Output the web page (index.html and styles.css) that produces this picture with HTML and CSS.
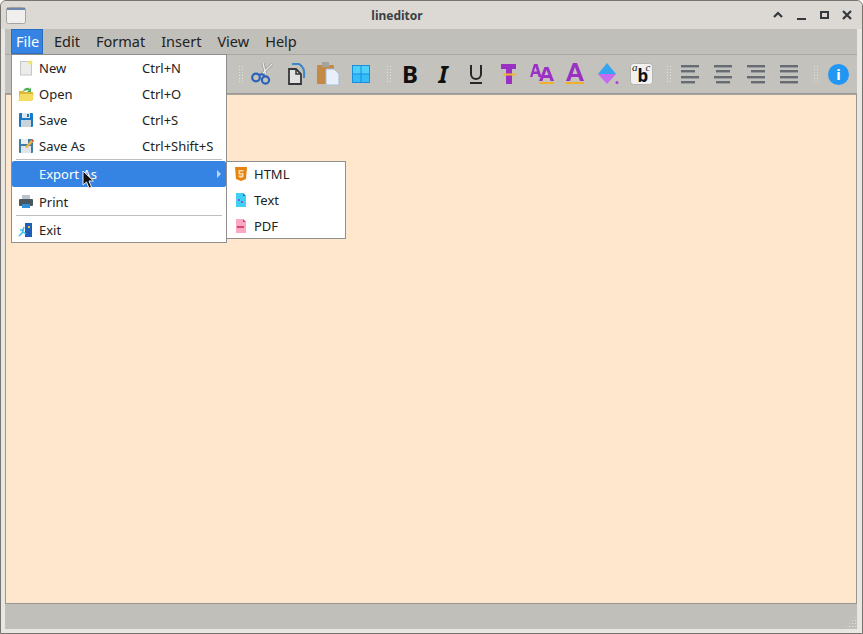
FILE: index.html
```html
<!DOCTYPE html>
<html lang="en">
<head>
    <meta charset="UTF-8">
    <meta name="viewport" content="width=device-width, initial-scale=1.0">
    <title>lineditor</title>
    <link rel="stylesheet" href="styles.css">
</head>
<body>
    <div class="window">
        <div class="titlebar">
            <svg class="app-icon" width="20" height="17" viewBox="0 0 20 17">
                <rect x="0.5" y="0.5" width="19" height="16" rx="2" fill="#f0efed" stroke="#a5a3a0"/>
                <rect x="1" y="1" width="18" height="2" fill="#6f86ad"/>
            </svg>
            <span class="title">lineditor</span>
            <div class="win-buttons">
                <svg width="12" height="12" viewBox="0 0 12 12"><path d="M2 8 L6 4 L10 8" fill="none" stroke="#33393d" stroke-width="2.2"/></svg>
                <svg width="12" height="12" viewBox="0 0 12 12"><rect x="2" y="9" width="9" height="2" fill="#33393d"/></svg>
                <svg width="12" height="12" viewBox="0 0 12 12"><rect x="3" y="3" width="7" height="6" fill="none" stroke="#33393d" stroke-width="2"/></svg>
                <svg width="12" height="12" viewBox="0 0 12 12"><path d="M2 2 L10 10 M10 2 L2 10" fill="none" stroke="#33393d" stroke-width="2.2"/></svg>
            </div>
        </div>
        <div class="content">
            <div class="menubar">
                <span class="menu-title active">File</span>
                <span class="menu-title">Edit</span>
                <span class="menu-title">Format</span>
                <span class="menu-title">Insert</span>
                <span class="menu-title">View</span>
                <span class="menu-title">Help</span>
            </div>
            <div class="toolbar">
                <span class="grip first-grip"></span>
                <svg class="tool" width="24" height="24" viewBox="0 0 24 24">
                    <path d="M13 1 L15.5 12 M22 2 L11 13" stroke="#8f8f8d" stroke-width="2.6" fill="none"/>
                    <path d="M13 1 L15.5 12 M22 2 L11 13" stroke="#ececea" stroke-width="1.4" fill="none"/>
                    <circle cx="6" cy="15.5" r="3.8" fill="none" stroke="#2a62b8" stroke-width="2.2"/>
                    <circle cx="15.5" cy="18" r="3.6" fill="none" stroke="#2a62b8" stroke-width="2.2"/>
                    <path d="M9 13 L12 12 L15 14" fill="none" stroke="#2a62b8" stroke-width="2"/>
                </svg>
                <svg class="tool" width="24" height="24" viewBox="0 0 24 24">
                    <path d="M9 2 H16 C20 4 22 8 21 16" fill="none" stroke="#3d87c4" stroke-width="2"/>
                    <path d="M6 7 H13 L18 12 V22 H6 Z" fill="#e2e2e0" stroke="#33363a" stroke-width="1.8"/>
                    <path d="M13 7 V12 H18" fill="none" stroke="#33363a" stroke-width="1.5"/>
                </svg>
                <svg class="tool" width="24" height="24" viewBox="0 0 24 24">
                    <rect x="1" y="3" width="17" height="19" rx="1" fill="#c48a45"/>
                    <rect x="6" y="0" width="7" height="5" fill="#a3a3a0"/>
                    <path d="M10 7 H18 L23 12 V23 H10 Z" fill="#e8eefa" stroke="#a9bcd4"/>
                </svg>
                <svg class="tool" width="24" height="24" viewBox="0 0 24 24">
                    <rect x="3" y="3" width="18" height="18" fill="#1a8fe0"/>
                    <rect x="4" y="4" width="7.5" height="7.5" fill="#4fd0fb"/>
                    <rect x="12.5" y="4" width="7.5" height="7.5" fill="#4fd0fb"/>
                    <rect x="4" y="12.5" width="7.5" height="7.5" fill="#35bdf5"/>
                    <rect x="12.5" y="12.5" width="7.5" height="7.5" fill="#35bdf5"/>
                </svg>
                <span class="grip second-grip"></span>
                <span class="tool-letter bold">B</span>
                <span class="tool-letter italic">I</span>
                <svg class="tool" width="24" height="24" viewBox="0 0 24 24">
                    <path d="M7 3 V12 C7 18.5 17 18.5 17 12 V3" fill="none" stroke="#26282a" stroke-width="2"/>
                    <rect x="6" y="20" width="12" height="2" fill="#26282a"/>
                </svg>
                <svg class="tool" width="24" height="24" viewBox="0 0 24 24">
                    <path d="M4 2 H19 V7 H15 V22 H9 V7 H4 Z" fill="#9b30c4"/>
                    <rect x="6" y="11.5" width="13" height="2" fill="#f4b52a"/>
                </svg>
                <svg class="tool" width="24" height="24" viewBox="0 0 24 24">
                    <path d="M0 15 L4 2 H7.5 L11.5 15 H8.5 L7.7 12 H3.3 L2.5 15 Z M4 9.5 H7 L5.5 5 Z" fill="#9b30c4" fill-rule="evenodd"/>
                    <path d="M9 19 L14.5 5 H18.5 L24 19 H20.5 L19.5 16 H13.5 L12.5 19 Z M14.5 13 H18.5 L16.5 8 Z" fill="#9b30c4" fill-rule="evenodd"/>
                    <rect x="9" y="20" width="15" height="2" fill="#f0b02a"/>
                </svg>
                <svg class="tool" width="24" height="24" viewBox="0 0 24 24">
                    <path d="M3 19 L10 1 H14 L21 19 H17 L15.5 15 H8.5 L7 19 Z M9.5 12 H14.5 L12 5 Z" fill="#9b30c4" fill-rule="evenodd"/>
                    <rect x="3" y="20" width="18" height="2" fill="#f0b02a"/>
                </svg>
                <svg class="tool" width="24" height="24" viewBox="0 0 24 24">
                    <path d="M11 1 L20 12 H2 Z" fill="#36a5f0"/>
                    <path d="M2 12 H20 L11 22 Z" fill="#c66bf0"/>
                    <circle cx="21" cy="20.5" r="1.5" fill="#b13fd8"/>
                </svg>
                <svg class="tool abc" width="24" height="24" viewBox="0 0 24 24">
                    <rect x="1.5" y="1.5" width="22" height="21" rx="3" fill="#f2f1ef" stroke="#b5b4b0"/>
                    <text x="3" y="9" class="abc-small">a</text>
                    <text x="8.5" y="20" class="abc-big">b</text>
                    <text x="16.5" y="9" class="abc-small">c</text>
                </svg>
                <span class="grip fourth-grip"></span>
                <span class="lines left"><i></i><i></i><i></i><i></i></span>
                <span class="lines center"><i></i><i></i><i></i><i></i></span>
                <span class="lines right"><i></i><i></i><i></i><i></i></span>
                <span class="lines fill"><i></i><i></i><i></i><i></i></span>
                <span class="grip third-grip"></span>
                <span class="info">i</span>
            </div>
            <div class="editor"></div>
            <div class="statusbar"><span class="size-grip"></span></div>
        </div>

        <div class="menu file-menu">
            <div class="item">
                <svg class="item-icon" width="16" height="16" viewBox="0 0 16 16">
                    <rect x="2.5" y="1.5" width="11" height="13.5" fill="#ececea" stroke="#c6c6c4"/>
                    <circle cx="12.5" cy="2.5" r="2" fill="#f4e45a"/>
                </svg>
                <span class="label">New</span><span class="shortcut">Ctrl+N</span>
            </div>
            <div class="item">
                <svg class="item-icon" width="16" height="16" viewBox="0 0 16 16">
                    <path d="M5 5 C7 1 10 1 12 3 L13 1 V6 H9 L11 4" fill="#4fae5a"/>
                    <path d="M1 5 H6 L7 6 H15 V14 H1 Z" fill="#d9b93a"/>
                    <path d="M2 8 H16 L14 15 H0.5 Z" fill="#f5dc60"/>
                </svg>
                <span class="label">Open</span><span class="shortcut">Ctrl+O</span>
            </div>
            <div class="item">
                <svg class="item-icon" width="16" height="16" viewBox="0 0 16 16">
                    <rect x="1" y="1" width="14" height="14" rx="1" fill="#1c78c4"/>
                    <rect x="4" y="1" width="8" height="5" fill="#dfe8ee"/>
                    <rect x="9" y="2" width="2" height="3" fill="#1c78c4"/>
                    <rect x="3" y="8" width="10" height="7" fill="#c9d3da"/>
                </svg>
                <span class="label">Save</span><span class="shortcut">Ctrl+S</span>
            </div>
            <div class="item">
                <svg class="item-icon" width="16" height="16" viewBox="0 0 16 16">
                    <rect x="1" y="1" width="14" height="14" rx="1" fill="#3f7fa6"/>
                    <rect x="3" y="1" width="7" height="5" fill="#e9eef2"/>
                    <rect x="3" y="8" width="10" height="7" fill="#dfe5e8"/>
                    <path d="M7 9 L14 1 L16 3 L9 10 Z" fill="#f0b040"/>
                    <path d="M14 1 L16 3 L15 4 L13 2 Z" fill="#d84f3f"/>
                </svg>
                <span class="label">Save As</span><span class="shortcut">Ctrl+Shift+S</span>
            </div>
            <div class="separator"></div>
            <div class="item selected">
                <span class="item-icon"></span>
                <span class="label">Export As</span>
                <span class="arrow"></span>
            </div>
            <div class="item print-item">
                <svg class="item-icon" width="16" height="16" viewBox="0 0 16 16">
                    <rect x="4" y="1" width="8" height="5" fill="#b9c4cc"/>
                    <rect x="1" y="5" width="14" height="7" rx="1" fill="#4a5660"/>
                    <rect x="4" y="10" width="8" height="4" fill="#2f8fd8"/>
                </svg>
                <span class="label">Print</span>
            </div>
            <div class="separator"></div>
            <div class="item exit-item">
                <svg class="item-icon" width="16" height="16" viewBox="0 0 16 16">
                    <rect x="7" y="1" width="7" height="14" fill="#1d5fb8"/>
                    <rect x="10" y="4" width="2" height="2" fill="#f2c230"/>
                    <path d="M2 8 H6 M6 5 L4 11 L1 14 M5 10 L8 12" fill="none" stroke="#35c2ee" stroke-width="1.5"/>
                </svg>
                <span class="label">Exit</span>
            </div>
        </div>

        <div class="menu export-menu">
            <div class="item">
                <svg class="item-icon" width="16" height="16" viewBox="0 0 16 16">
                    <path d="M2 1 H14 L13 13 L8 15 L3 13 Z" fill="#e8820c"/>
                    <path d="M5.5 4 H10.5 V5.5 H7 V7 H10.5 V11 L8 12 L5.5 11 V9.5 H9 V8.5 H5.5 Z" fill="#f6dcae"/>
                </svg>
                <span class="label">HTML</span>
            </div>
            <div class="item">
                <svg class="item-icon" width="16" height="16" viewBox="0 0 16 16">
                    <path d="M3 1 H10 L13 4 V15 H3 Z" fill="#3fd0f4"/>
                    <path d="M10 1 L13 4 H10 Z" fill="#1d7fc0"/>
                    <rect x="5" y="7" width="2" height="2" fill="#7a60d0"/>
                    <rect x="8" y="9" width="2" height="2" fill="#8a50d8"/>
                </svg>
                <span class="label">Text</span>
            </div>
            <div class="item">
                <svg class="item-icon" width="16" height="16" viewBox="0 0 16 16">
                    <path d="M3 1 H10 L13 4 V15 H3 Z" fill="#fba8c4"/>
                    <path d="M10 1 L13 4 H10 Z" fill="#e0406f"/>
                    <rect x="4" y="8" width="7" height="2" fill="#d8486f"/>
                </svg>
                <span class="label">PDF</span>
            </div>
        </div>

        <svg class="cursor" width="14" height="20" viewBox="0 0 14 20">
            <path d="M1 1 V15 L4.5 12 L7 18 L9.5 17 L7 11 H11.5 Z" fill="#111" stroke="#eee" stroke-width="1"/>
        </svg>
    </div>
</body>
</html>
```

FILE: styles.css
```css
* {
    box-sizing: border-box;
    margin: 0;
    padding: 0;
}

html, body {
    width: 863px;
    height: 634px;
    overflow: hidden;
}

body {
    font-family: "Noto Sans", sans-serif;
    background: #fff;
}

.window {
    position: relative;
    width: 863px;
    height: 634px;
    background: #e9e7e4;
    border: 1px solid #77746f;
    border-radius: 6px 6px 0 0;
    display: flex;
    flex-direction: column;
}

.titlebar {
    height: 28px;
    flex-shrink: 0;
    background: #dcd8d4;
    border-radius: 6px 6px 0 0;
    display: flex;
    align-items: center;
    padding: 0 9px 0 5px;
}

.title {
    flex: 1;
    text-align: center;
    font-size: 12px;
    font-weight: 700;
    color: #3a3f42;
    padding-right: 4px;
}

.win-buttons {
    display: flex;
    gap: 11px;
}

.content {
    flex: 1;
    display: flex;
    flex-direction: column;
    margin: 0 5px 4px 4px;
}

.menubar {
    height: 25px;
    background: #c0bfba;
    display: flex;
    padding-left: 6px;
    font-size: 14.5px;
    color: #222;
}

.menu-title {
    padding: 0 8px;
    line-height: 25px;
}

.menu-title.active {
    background: #3584e4;
    border: 1px solid #2a6cbd;
    color: #fff;
    padding: 0 4px;
    width: 32px;
    line-height: 23px;
    margin-right: 3px;
}

.toolbar {
    height: 40px;
    background: #c3c2bd;
    border-top: 1px solid #a9a8a3;
    border-bottom: 1px solid #9a9994;
    display: flex;
    align-items: center;
    padding-left: 233px;
}

.grip {
    width: 6px;
    height: 18px;
    flex-shrink: 0;
    background-image: radial-gradient(#e4e3e0 1px, transparent 1px);
    background-size: 3px 3px;
}

.tool {
    flex-shrink: 0;
    margin-right: 9px;
}

.tool.abc {
    margin-right: 0;
}

.abc-small {
    font-family: "Liberation Serif", serif;
    font-size: 11px;
    font-style: italic;
    fill: #222;
}

.abc-big {
    font-family: "Noto Sans", sans-serif;
    font-size: 17px;
    font-weight: 700;
    fill: #111;
}

.first-grip {
    margin-right: 6px;
}

.second-grip {
    margin: 0 6px 0 4px;
}

.fourth-grip {
    margin: 0 9px 0 13px;
}

.third-grip {
    margin: 0 9px 0 0;
}

.tool-letter {
    width: 24px;
    margin-right: 9px;
    text-align: center;
    line-height: 24px;
    color: #111;
    font-size: 24px;
    font-weight: 700;
}

.tool-letter.italic {
    font-style: italic;
}

.lines {
    width: 18px;
    height: 18px;
    margin-right: 15px;
    display: flex;
    flex-direction: column;
    justify-content: space-between;
    flex-shrink: 0;
}

.lines i {
    display: block;
    height: 2px;
    width: 100%;
    background: #666c72;
    box-shadow: 0 1px 0 #9a9ea0;
}

.lines.left i:nth-child(even),
.lines.center i:nth-child(even),
.lines.right i:nth-child(even) {
    width: 14px;
}

.lines.center {
    align-items: center;
}

.lines.right {
    align-items: flex-end;
}

.info {
    width: 21px;
    height: 21px;
    flex-shrink: 0;
    border-radius: 50%;
    background: #2196f3;
    color: #fff;
    font-size: 15px;
    font-weight: 700;
    line-height: 21px;
    text-align: center;
}

.editor {
    flex: 1;
    background: #ffe7cd;
    border: 1px solid #98968f;
    border-top-color: #a8a59e;
}

.statusbar {
    height: 25px;
    background: #c0bfba;
    position: relative;
}

.size-grip {
    position: absolute;
    right: 0;
    bottom: 1px;
    width: 12px;
    height: 12px;
    background-image: radial-gradient(#e4e3e0 1px, transparent 1px);
    background-size: 3px 3px;
    clip-path: polygon(100% 0, 100% 100%, 0 100%);
}

.menu {
    position: absolute;
    background: #fff;
    border: 1px solid #8f8f8f;
    font-size: 13px;
    color: #222;
}

.file-menu {
    left: 10px;
    top: 53px;
    width: 216px;
    height: 189px;
}

.export-menu {
    left: 225px;
    top: 160px;
    width: 120px;
    height: 78px;
}

.export-menu .item:first-child {
    margin-top: -1px;
}

.item {
    height: 26px;
    display: flex;
    align-items: center;
    padding-left: 6px;
    position: relative;
}

.item-icon {
    width: 16px;
    height: 16px;
    flex-shrink: 0;
    margin-right: 5px;
}

.label {
    flex: 1;
}

.shortcut {
    position: absolute;
    left: 130px;
}

.separator {
    height: 1px;
    background: #bdbdbd;
    margin: 0 4px;
}

.item.selected {
    background: #3584e4;
    color: #fff;
    margin-top: 1px;
    border-radius: 2px;
}

.print-item {
    margin-top: 2px;
}

.exit-item {
    padding-top: 2px;
}

.arrow {
    position: absolute;
    right: 5px;
    top: 9px;
    border-left: 4px solid #b9d4f6;
    border-top: 4px solid transparent;
    border-bottom: 4px solid transparent;
}

.cursor {
    position: absolute;
    left: 81px;
    top: 169px;
}
```
